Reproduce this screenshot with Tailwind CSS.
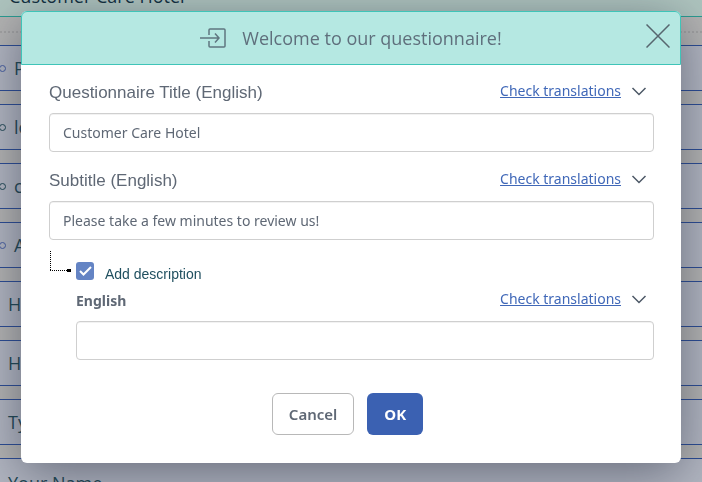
<!DOCTYPE html>
<html lang="en">
<head>
<meta charset="UTF-8">
<meta name="viewport" content="width=device-width, initial-scale=1.0">
<title>Customer Care Hotel - Questionnaire</title>
<script src="https://cdn.jsdelivr.net/npm/@tailwindcss/browser@4"></script>
</head>
<body class="bg-[#b4b4b3] font-['Noto_Sans',sans-serif] text-[#5f6875]">

<!-- Questionnaire behind the dialog -->
<main class="h-screen overflow-hidden font-['Open_Sans',sans-serif] text-lg text-[#1f4854]">
<h1 class="flex h-[17px] items-end border-b border-[#2a9d92] bg-[#afc5bf] pb-[6px] pl-[9px] text-[#12303f]">Customer Care Hotel</h1>
<div class="mb-3 h-4 border-b-2 border-dotted border-[#a3a3a3]"></div>
<ul class="flex flex-col gap-[13px]">
<li class="flex h-[46px] items-center gap-2 border-y border-[#2b4c94] bg-[#b2b6c1]"><span class="-ml-px size-[7px] rounded-full border border-[#465da0]"></span>Personal details</li>
<li class="flex h-[46px] items-center gap-2 border-y border-[#2b4c94] bg-[#b2b6c1]"><span class="-ml-px size-[7px] rounded-full border border-[#1f4854]"></span>location</li>
<li class="flex h-[46px] items-center gap-2 border-y border-[#2b4c94] bg-[#b2b6c1]"><span class="-ml-px size-[7px] rounded-full border border-[#1f4854]"></span>contact</li>
<li class="flex h-[46px] items-center gap-2 border-y border-[#2b4c94] bg-[#b2b6c1]"><span class="-ml-px size-[7px] rounded-full border border-[#465da0]"></span>Address</li>
<li class="flex h-[46px] items-center border-y border-[#2b4c94] bg-[#b2b6c1] pl-2">How was it</li>
<li class="flex h-[46px] items-center border-y border-[#2b4c94] bg-[#b2b6c1] pl-2">How was it</li>
<li class="flex h-[46px] items-center border-y border-[#2b4c94] bg-[#b2b6c1] pl-2">Type</li>
<li class="flex h-[50px] items-center border-y border-[#2b4c94] bg-[#b2b6c1] pl-2">Your Name</li>
</ul>
</main>

<!-- Dialog -->
<div class="fixed inset-0 flex items-start px-[21px] pt-[11px]">
<section role="dialog" aria-labelledby="dialogTitle" class="w-full rounded-md bg-white shadow-[0_10px_50px_rgba(30,35,55,0.5)]">
<header class="relative flex h-[54px] items-center justify-center gap-4 rounded-t-md border border-[#3fc4b8] bg-[#b5e8e2]">
<svg class="h-5 w-[26px]" viewBox="0 0 26 20" fill="none" stroke="#5f7680" stroke-width="1.5">
<path d="M9 7V2q0-1 1-1h14q1 0 1 1v16q0 1-1 1H10q-1 0-1-1v-5M0 10h19M15 5.500L19 10l-4 4.500"/>
</svg>
<h2 id="dialogTitle" class="font-['Open_Sans',sans-serif] text-lg text-[#5f6f7c]">Welcome to our questionnaire!</h2>
<button type="button" aria-label="Close" class="absolute top-3 right-[10px]">
<svg class="size-6" viewBox="0 0 24 24" fill="none" stroke="#57666f" stroke-width="1.5"><path d="M.5.5l23 23M23.500.5l-23 23"/></svg>
</button>
</header>

<form class="pt-2 pr-[27px] pb-7 pl-7">
<div class="flex h-10 items-center justify-between">
<label for="title" class="font-['Liberation_Sans',sans-serif] text-[17px]">Questionnaire Title (English)</label>
<div class="flex items-center gap-[10px] pr-[7px] pb-1">
<a href="#" class="text-sm text-[#4068b8] underline">Check translations</a>
<svg class="h-[9px] w-4" viewBox="0 0 16 9" fill="none" stroke="#4d5866" stroke-width="1.5"><path d="M1.500 1L8 7.500 14.500 1"/></svg>
</div>
</div>
<input id="title" type="text" value="Customer Care Hotel" class="block h-[39px] w-full rounded border border-[#cfcfcf] px-[13px] text-sm inset-shadow-2xs">

<div class="mt-[9px] flex h-10 items-center justify-between">
<label for="subtitle" class="font-['Liberation_Sans',sans-serif] text-[17px]">Subtitle (English)</label>
<div class="flex items-center gap-[10px] pr-[7px] pb-1">
<a href="#" class="text-sm text-[#4068b8] underline">Check translations</a>
<svg class="h-[9px] w-4" viewBox="0 0 16 9" fill="none" stroke="#4d5866" stroke-width="1.5"><path d="M1.500 1L8 7.500 14.500 1"/></svg>
</div>
</div>
<input id="subtitle" type="text" value="Please take a few minutes to review us!" class="block h-[39px] w-full rounded border border-[#cfcfcf] px-[13px] text-sm inset-shadow-2xs">

<div class="flex h-[41px] items-start pt-[11px]">
<!-- dotted connector to the nested field -->
<svg class="mr-[5px] h-[22px] w-[22px]" viewBox="0 0 22 22" shape-rendering="crispEdges">
<path d="M1.500 0V20M1 19.500H18" fill="none" stroke="#000" stroke-dasharray="1 1"/>
<path d="M18 18h4v3h-4z"/>
</svg>
<div class="mt-[11px] grid">
<input id="addDescription" type="checkbox" checked class="col-start-1 row-start-1 size-[18px] appearance-none rounded-[3px] bg-[#6484c4]">
<svg class="pointer-events-none col-start-1 row-start-1 size-[18px]" viewBox="0 0 18 18" fill="none" stroke="#fff" stroke-width="2"><path d="M4 9l3.500 3.500L15 5"/></svg>
</div>
<label for="addDescription" class="mt-[13px] ml-[11px] font-['Liberation_Sans',sans-serif] text-sm text-[#1f4f5f]">Add description</label>
</div>

<div class="pl-[27px]">
<div class="flex h-10 items-center justify-between">
<label for="description" class="text-sm font-bold">English</label>
<div class="flex items-center gap-[10px] pr-[7px] pb-1">
<a href="#" class="text-sm text-[#4068b8] underline">Check translations</a>
<svg class="h-[9px] w-4" viewBox="0 0 16 9" fill="none" stroke="#4d5866" stroke-width="1.5"><path d="M1.500 1L8 7.500 14.500 1"/></svg>
</div>
</div>
<input id="description" type="text" class="block h-[39px] w-full rounded border border-[#cfcfcf] px-[13px] text-sm inset-shadow-2xs">
</div>

<div class="mt-[33px] flex justify-center gap-[13px] pr-2">
<button type="button" class="h-[42px] rounded-md border border-[#b8b8b8] bg-white px-4 text-[15px] font-semibold">Cancel</button>
<button type="submit" class="h-[42px] rounded-md bg-[#3b61b2] px-[17px] text-[15px] font-bold text-white">OK</button>
</div>
</form>
</section>
</div>
</body>
</html>
